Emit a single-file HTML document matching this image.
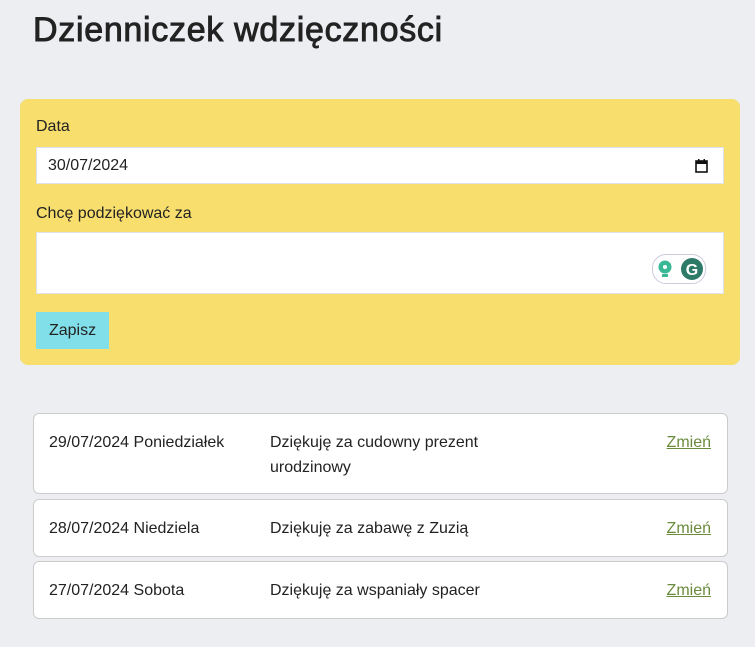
<!DOCTYPE html>
<html><head><meta charset="utf-8"><style>
body{margin:0;background:#edeef2;font-family:"Liberation Sans",sans-serif;color:#222;font-size:16px;}
h1{position:absolute;left:33px;top:11px;margin:0;font-size:34px;font-weight:normal;-webkit-text-stroke:0.9px #222;color:#222;letter-spacing:0.7px}
.form{position:absolute;left:20px;top:99px;width:720px;height:266px;background:#f8de6c;border-radius:8px}
.lbl{position:absolute;left:16px;font-size:16px}
.in{position:absolute;left:16px;width:686px;background:#fff;border:1px solid #dde1ea}
.btn{position:absolute;left:16px;top:213px;width:73px;height:37px;background:#80dfe8;line-height:37px;text-align:center}
.card{position:absolute;left:33px;width:693px;background:#fff;border:1px solid #ccc;border-radius:6px}
.d{position:absolute;left:15px;top:20px}
.t{position:absolute;left:236px;top:20px;width:240px;line-height:25px;margin-top:-4px}
.z{position:absolute;right:16px;top:20px;color:#6a8b3c;text-decoration:underline}
</style></head><body>
<h1>Dzienniczek wdzięczności</h1>
<div class="form">
<div class="lbl" style="top:19px">Data</div>
<div class="in" style="top:48px;height:35px"><span style="position:absolute;left:11px;top:9px">30/07/2024</span>
<svg style="position:absolute;right:15px;top:11px" width="13" height="14" viewBox="0 0 13 14"><rect x="1" y="2" width="11" height="11" fill="none" stroke="#111" stroke-width="1.6"/><rect x="1" y="2" width="11" height="3" fill="#111"/><rect x="3" y="0" width="1.5" height="3" fill="#111"/><rect x="8.5" y="0" width="1.5" height="3" fill="#111"/></svg></div>
<div class="lbl" style="top:106px">Chcę podziękować za</div>
<div class="in" style="top:133px;height:60px">
<div style="position:absolute;left:615px;top:21px;width:52px;height:28px;border:1px solid #ccd;border-radius:14px;background:#fff"></div>
<svg style="position:absolute;left:621px;top:27px" width="16" height="18"><circle cx="7" cy="7" r="6.5" fill="#3ab795"/><rect x="4" y="14" width="6" height="3" fill="#3ab795"/><circle cx="7" cy="7" r="2" fill="#fff"/></svg>
<svg style="position:absolute;left:644px;top:25px" width="22" height="22"><circle cx="11" cy="11" r="11" fill="#2d7a68"/><text x="11" y="17" font-size="16" font-weight="bold" fill="#fff" text-anchor="middle" font-family="Liberation Sans">G</text></svg>
</div>
<div class="btn">Zapisz</div>
</div>
<div class="card" style="top:413px;height:79px"><span class="d">29/07/2024 Poniedziałek</span><span class="t">Dziękuję za cudowny prezent urodzinowy</span><span class="z">Zmień</span></div>
<div class="card" style="top:499px;height:56px"><span class="d">28/07/2024 Niedziela</span><span class="t">Dziękuję za zabawę z Zuzią</span><span class="z">Zmień</span></div>
<div class="card" style="top:561px;height:56px"><span class="d">27/07/2024 Sobota</span><span class="t">Dziękuję za wspaniały spacer</span><span class="z">Zmień</span></div>
</body></html>
